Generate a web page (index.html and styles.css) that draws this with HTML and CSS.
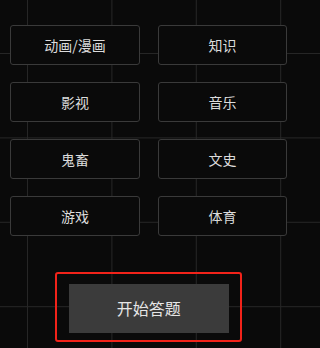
FILE: index.html
```html
<!DOCTYPE html>
<html lang="zh-CN">
<head>
<meta charset="utf-8">
<link rel="stylesheet" href="styles.css">
</head>
<body>
<div class="page">
  <div class="cats">
    <div class="cat">动画/漫画</div>
    <div class="cat">知识</div>
    <div class="cat">影视</div>
    <div class="cat">音乐</div>
    <div class="cat">鬼畜</div>
    <div class="cat">文史</div>
    <div class="cat">游戏</div>
    <div class="cat">体育</div>
  </div>
  <div class="start-wrap">
    <div class="start">开始答题</div>
  </div>
</div>
</body>
</html>
```
FILE: styles.css
```css
html, body {
  margin: 0;
  padding: 0;
}
body {
  width: 306px;
  height: 348px;
  overflow: hidden;
  background-color: #0a0a0a;
  background-image:
    linear-gradient(to right, #262626 1px, transparent 1px),
    linear-gradient(to bottom, #262626 1px, transparent 1px);
  background-size: 84.4px 84.4px;
  background-position: 27px 53px;
  font-family: "Noto Sans CJK SC", "Noto Sans", sans-serif;
}
.page {
  width: 277px;
  margin-left: 10px;
  padding-top: 25px;
  display: flex;
  flex-direction: column;
  align-items: center;
}
.cats {
  width: 100%;
  display: grid;
  grid-template-columns: 130px 129px;
  grid-auto-rows: 40px;
  column-gap: 18px;
  row-gap: 17px;
}
.cat {
  box-sizing: border-box;
  border: 1px solid #3a3a3a;
  border-radius: 3px;
  background: #0a0a0a;
  color: #dcdcdc;
  font-size: 14px;
  display: flex;
  align-items: center;
  justify-content: center;
  padding-bottom: 1px;
}
.start-wrap {
  margin-top: 36px;
  border: 2.5px solid #f2231a;
  border-radius: 3px;
  padding: 9.5px 11px 7.5px 11.5px;
}
.start {
  width: 160px;
  height: 49px;
  background: #3b3b3b;
  color: #e6e6e6;
  font-size: 16px;
  display: flex;
  align-items: center;
  justify-content: center;
}
```
